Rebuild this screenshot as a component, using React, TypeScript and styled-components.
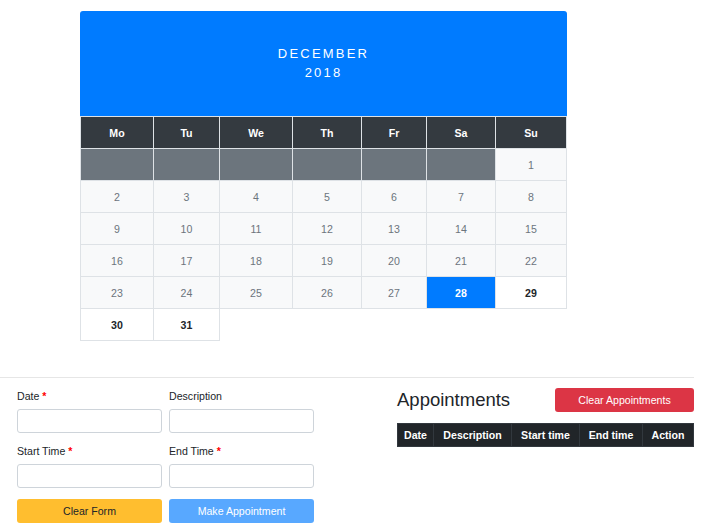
import React from "react";
import styled, { createGlobalStyle } from "styled-components";

const Global = createGlobalStyle`
  * { box-sizing: border-box; }
  body {
    margin: 0;
    background: #fff;
    color: #212529;
    font-family: "Liberation Sans", Arial, Helvetica, sans-serif;
    font-size: 10.6px;
  }
`;

const Page = styled.div`
  width: 702px;
  padding-top: 11px;
`;

const Calendar = styled.section`
  margin-left: 80px;
  width: 487px;
`;

const MonthHeader = styled.header`
  height: 105px;
  background: #007bff;
  border-radius: 3px 3px 0 0;
  color: #fff;
  display: flex;
  flex-direction: column;
  align-items: center;
  justify-content: center;
  font-size: 13px;
  letter-spacing: 2.2px;
  line-height: 18.3px;
  text-transform: uppercase;
`;

const CalTable = styled.table`
  width: 486px;
  table-layout: fixed;
  border-collapse: collapse;
`;

const Col = styled.col<{ $w: number }>`
  width: ${(p) => p.$w}px;
`;

const DayName = styled.th`
  height: 32px;
  padding: 0;
  background: #343a40;
  color: #fff;
  font-weight: 700;
  font-size: 10.6px;
  text-align: center;
  border: 1px solid #dee2e6;
`;

type CellKind = "blank" | "past" | "today" | "future";

const DayCell = styled.td<{ $kind: CellKind }>`
  height: 32px;
  padding: 0;
  text-align: center;
  font-size: 10.6px;
  border: 1px solid #dee2e6;
  background: ${(p) =>
    p.$kind === "blank"
      ? "#6c757d"
      : p.$kind === "past"
      ? "#f8f9fa"
      : p.$kind === "today"
      ? "#007bff"
      : "#fff"};
  color: ${(p) =>
    p.$kind === "today" ? "#fff" : p.$kind === "future" ? "#212529" : "#6c757d"};
  font-weight: ${(p) => (p.$kind === "today" || p.$kind === "future" ? 700 : 400)};
`;

const Divider = styled.hr`
  width: 694px;
  margin: 36px 0 0 0;
  border: 0;
  border-top: 1px solid #e6e6e6;
  height: 0;
`;

const BottomRow = styled.div`
  display: flex;
  padding-top: 10px;
`;

const FormCol = styled.form`
  width: 397px;
  padding-left: 17px;
  display: grid;
  grid-template-columns: 145px 145px;
  column-gap: 7px;
  align-content: start;
`;

const Field = styled.div`
  display: flex;
  flex-direction: column;
`;

const Label = styled.label`
  line-height: 16px;
  margin-bottom: 5px;
  color: #212529;
`;

const Req = styled.span`
  color: #ff0000;
  font-weight: 700;
`;

const Input = styled.input`
  height: 24px;
  margin: 0 0 10px 0;
  border: 1px solid #ced4da;
  border-radius: 3px;
  padding: 0 6px;
  font: inherit;
  background: #fff;
`;

const Button = styled.button<{ $variant: "warning" | "primary" | "danger"; $disabled?: boolean }>`
  height: 24px;
  border: 0;
  border-radius: 3px;
  font-family: inherit;
  font-size: 10.6px;
  padding: 0;
  cursor: pointer;
  background: ${(p) =>
    p.$variant === "warning" ? "#ffbe2f" : p.$variant === "danger" ? "#dc3545" : "#007bff"};
  color: ${(p) => (p.$variant === "warning" ? "#212529" : "#fff")};
  opacity: ${(p) => (p.$disabled ? 0.65 : 1)};
`;

const FormButton = styled(Button)`
  margin-top: 1px;
`;

const RightCol = styled.div`
  width: 297px;
`;

const HeadRow = styled.div`
  display: flex;
  justify-content: space-between;
  align-items: center;
  height: 24px;
`;

const Heading = styled.h2`
  margin: 0;
  font-size: 18.5px;
  font-weight: 400;
  line-height: 24px;
  color: #212529;
`;

const ClearAppts = styled(Button)`
  width: 139px;
`;

const ApptTable = styled.table`
  width: 296px;
  margin-top: 11px;
  border-collapse: collapse;
  table-layout: fixed;
`;

const ApptTh = styled.th`
  height: 23px;
  padding: 0;
  background: #212529;
  color: #fff;
  font-weight: 700;
  font-size: 10.6px;
  text-align: center;
  white-space: nowrap;
  border: 1px solid #32383e;
`;

const dayNames = ["Mo", "Tu", "We", "Th", "Fr", "Sa", "Su"];
const colWidths = [73, 66, 73, 69, 65, 69, 71];
const apptCols: [string, number][] = [
  ["Date", 36],
  ["Description", 78],
  ["Start time", 68],
  ["End time", 63],
  ["Action", 51],
];

type Cell = { label: string; kind: CellKind };

function buildWeeks(): Cell[][] {
  const cells: Cell[] = [];
  for (let i = 0; i < 6; i++) cells.push({ label: "", kind: "blank" });
  for (let d = 1; d <= 31; d++) {
    cells.push({
      label: String(d),
      kind: d < 28 ? "past" : d === 28 ? "today" : "future",
    });
  }
  const weeks: Cell[][] = [];
  for (let i = 0; i < cells.length; i += 7) weeks.push(cells.slice(i, i + 7));
  return weeks;
}

export default function App() {
  const weeks = buildWeeks();
  return (
    <Page>
      <Global />
      <Calendar>
        <MonthHeader>
          <div>December</div>
          <div>2018</div>
        </MonthHeader>
        <CalTable>
          <colgroup>
            {colWidths.map((w, i) => (
              <Col key={i} $w={w} />
            ))}
          </colgroup>
          <thead>
            <tr>
              {dayNames.map((d) => (
                <DayName key={d}>{d}</DayName>
              ))}
            </tr>
          </thead>
          <tbody>
            {weeks.map((week, wi) => (
              <tr key={wi}>
                {week.map((c, ci) => (
                  <DayCell key={ci} $kind={c.kind}>
                    {c.label}
                  </DayCell>
                ))}
              </tr>
            ))}
          </tbody>
        </CalTable>
      </Calendar>
      <Divider />
      <BottomRow>
        <FormCol onSubmit={(e) => e.preventDefault()}>
          <Field>
            <Label>
              Date <Req>*</Req>
            </Label>
            <Input type="text" />
          </Field>
          <Field>
            <Label>Description</Label>
            <Input type="text" />
          </Field>
          <Field>
            <Label>
              Start Time <Req>*</Req>
            </Label>
            <Input type="text" />
          </Field>
          <Field>
            <Label>
              End Time <Req>*</Req>
            </Label>
            <Input type="text" />
          </Field>
          <FormButton type="button" $variant="warning">
            Clear Form
          </FormButton>
          <FormButton type="submit" $variant="primary" $disabled>
            Make Appointment
          </FormButton>
        </FormCol>
        <RightCol>
          <HeadRow>
            <Heading>Appointments</Heading>
            <ClearAppts type="button" $variant="danger">
              Clear Appointments
            </ClearAppts>
          </HeadRow>
          <ApptTable>
            <colgroup>
              {apptCols.map(([k, w]) => (
                <Col key={k} $w={w} />
              ))}
            </colgroup>
            <thead>
              <tr>
                {apptCols.map(([k]) => (
                  <ApptTh key={k}>{k}</ApptTh>
                ))}
              </tr>
            </thead>
          </ApptTable>
        </RightCol>
      </BottomRow>
    </Page>
  );
}
